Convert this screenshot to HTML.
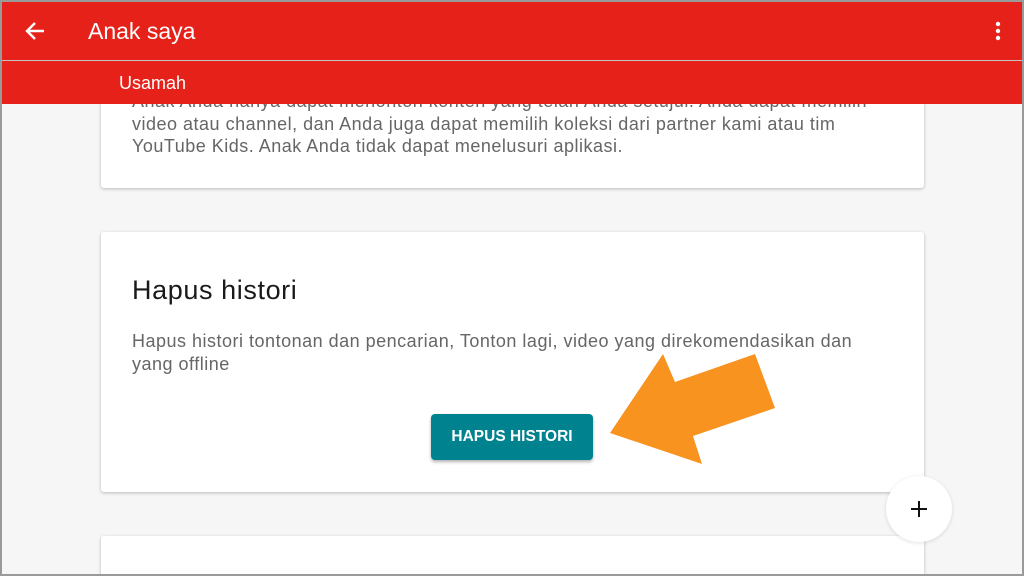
<!DOCTYPE html>
<html><head><style>
*{margin:0;padding:0;box-sizing:border-box}
html,body{width:1024px;height:576px;overflow:hidden}
body{background:#f6f6f6;font-family:"Liberation Sans",sans-serif;position:relative}
.frame{position:absolute;inset:0;border:2px solid #9a9a9a;z-index:10;pointer-events:none}
.card{position:absolute;left:101px;width:823px;background:#fff;border-radius:3px;box-shadow:0 1px 3px rgba(0,0,0,.25)}
.txt{color:#666;font-size:18px;line-height:22.5px;letter-spacing:0.5px;white-space:nowrap}
</style></head><body>
<div class="card" style="top:80px;height:108px">
 <div class="txt" style="position:absolute;left:31px;top:10px">Anak Anda hanya dapat menonton konten yang telah Anda setujui. Anda dapat memilih<br>video atau channel, dan Anda juga dapat memilih koleksi dari partner kami atau tim<br>YouTube Kids. Anak Anda tidak dapat menelusuri aplikasi.</div>
</div>
<div style="position:absolute;left:0;top:0;width:1024px;height:60px;background:#e52119;box-shadow:0 1px 2px rgba(0,0,0,.3)">
 <svg style="position:absolute;left:24px;top:21px" width="22" height="20" viewBox="0 0 22 20"><path d="M20 10H3M11 2L3 10l8 8" stroke="#fff" stroke-width="2.4" fill="none"/></svg>
 <div style="position:absolute;left:88px;top:18px;color:#fff;font-size:23px">Anak saya</div>
 <svg style="position:absolute;left:994px;top:21px" width="8" height="20"><circle cx="4" cy="3" r="2.2" fill="#fff"/><circle cx="4" cy="10" r="2.2" fill="#fff"/><circle cx="4" cy="17" r="2.2" fill="#fff"/></svg>
</div>
<div style="position:absolute;left:0;top:61px;width:1024px;height:43px;background:#e52119">
 <div style="position:absolute;left:119px;top:12px;color:#fff;font-size:18px">Usamah</div>
</div>
<div class="card" style="top:232px;height:260px">
 <div style="position:absolute;left:31px;top:43px;font-size:27px;letter-spacing:0.6px;color:#1a1a1a">Hapus histori</div>
 <div class="txt" style="position:absolute;left:31px;top:98px">Hapus histori tontonan dan pencarian, Tonton lagi, video yang direkomendasikan dan<br>yang offline</div>
 <div style="position:absolute;left:330px;top:182px;width:162px;height:46px;background:#00838f;border-radius:4px;box-shadow:0 2px 3px rgba(0,0,0,.3);color:#fff;font-weight:bold;font-size:15.5px;line-height:46px;text-align:center">HAPUS HISTORI</div>
</div>
<div class="card" style="top:536px;height:40px;border-radius:3px 3px 0 0"></div>
<svg style="position:absolute;left:0;top:0" width="1024" height="576"><polygon points="610,433 663,354 675,382 755,354 775,408 693,436 702,464" fill="#f7931e"/></svg>
<div style="position:absolute;left:886px;top:476px;width:66px;height:66px;border-radius:50%;background:#fff;box-shadow:0 1px 4px rgba(0,0,0,.12)">
 <svg style="position:absolute;left:23px;top:23px" width="20" height="20"><path d="M10 2v16M2 10h16" stroke="#111" stroke-width="2"/></svg>
</div>
<div class="frame"></div>
</body></html>
